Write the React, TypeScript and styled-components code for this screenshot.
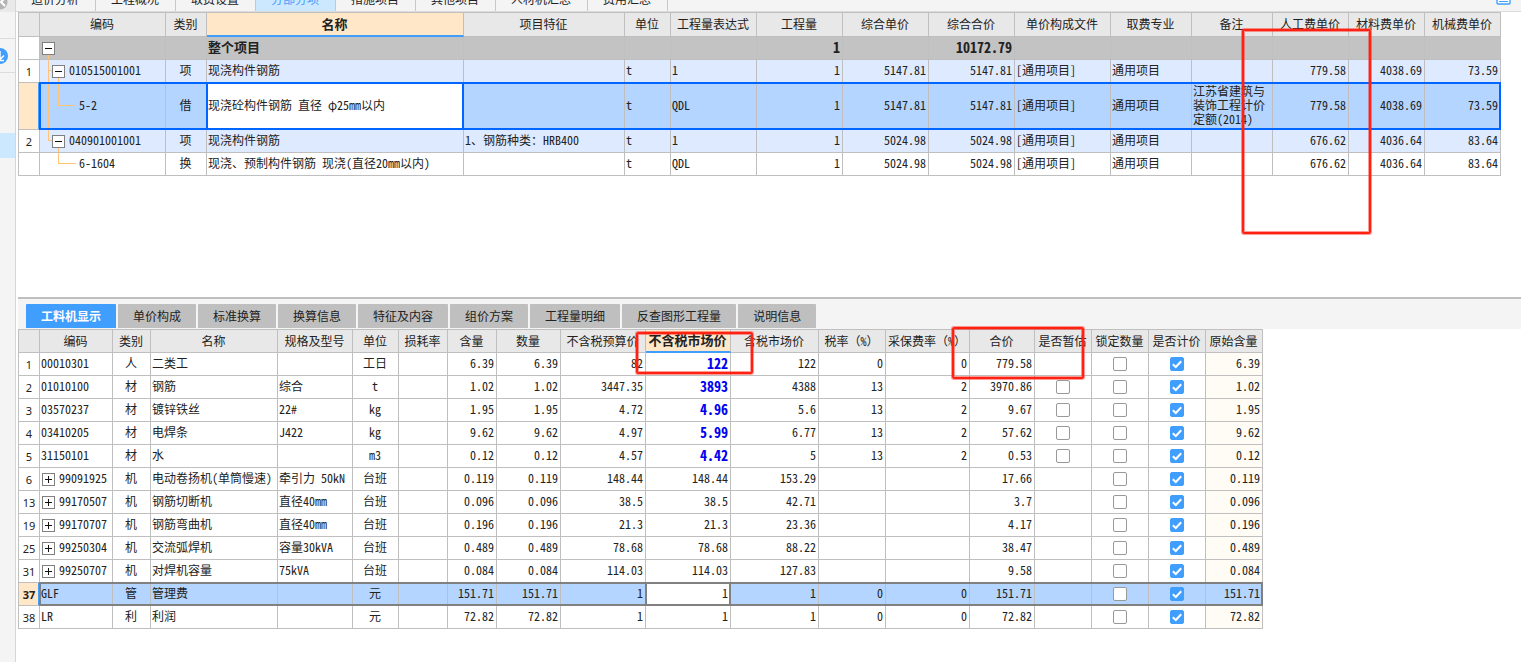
import React from "react";
import styled, { createGlobalStyle, css } from "styled-components";

const GRID_FONT = `"Noto Sans Mono CJK SC", "Noto Sans CJK SC", sans-serif`;
const UI_FONT = `"Noto Sans CJK SC", sans-serif`;

const color = {
  line: "#bfbfbf",
  chrome: "#f4f4f4",
  header: "#e8e8e8",
  accent: "#409eff",
  focus: "#0066ff",
  tint: "#ffe7c8",
  selected: "#b3d5ff",
  item: "#deeaff",
  total: "#c3c3c3",
  mark: "#ff2212",
  tree: "#ffc477",
};

const GlobalStyle = createGlobalStyle`
  *, *::before, *::after { box-sizing: border-box; }
  body { margin: 0; background: #fff; color: #222; font-family: ${UI_FONT}; font-size: 12px; }
  button { font: inherit; color: inherit; }
`;

const Page = styled.div`
  display: flex;
  min-height: 100vh;
  overflow: hidden;
`;

const Sidebar = styled.aside`
  flex: 0 0 16px;
  display: flex;
  flex-direction: column;
  overflow: hidden;
  background: ${color.chrome};
  border-right: 1px solid #d6d6d6;
`;

const SideItem = styled.button<{ $height: number; $shade?: string; $line?: boolean }>`
  display: flex;
  align-items: center;
  flex: none;
  height: ${(p) => p.$height}px;
  overflow: hidden;
  padding: 0;
  border: 0;
  border-bottom: ${(p) => (p.$line ? "1px solid #dcdcdc" : "0")};
  background: ${(p) => p.$shade ?? "transparent"};

  svg {
    flex: none;
    margin-left: -8px;
  }
`;

const SideGap = styled.div`
  flex: 0 0 60px;
`;

const Main = styled.main`
  flex: 1;
  min-width: 0;
  display: flex;
  flex-direction: column;
`;

const PageTabs = styled.nav`
  display: flex;
  align-items: flex-end;
  height: 12px;
  overflow: hidden;
  background: ${color.chrome};
  border-bottom: 1px solid #dcdcdc;
`;

const PageTab = styled.button<{ $active?: boolean }>`
  flex: none;
  height: 24px;
  padding: 0 16px 0 15px;
  border: 0;
  border-right: 1px solid #c8c8c8;
  line-height: 24px;
  background: ${(p) => (p.$active ? "#cce8ff" : "transparent")};
  color: ${(p) => (p.$active ? "#4a9dff" : "#222")};
`;

const PanelButton = styled.button`
  display: flex;
  margin-left: auto;
  padding: 0 10px 6px 0;
  border: 0;
  background: none;
`;

const UpperPane = styled.section`
  position: relative;
  flex: 0 0 285px;
  padding-left: 2px;
`;

const LowerPane = styled.section`
  position: relative;
  flex: 1;
  padding-left: 2px;
`;

const DetailTabs = styled.nav`
  display: flex;
  align-items: flex-end;
  gap: 2px;
  height: 32px;
  padding: 0 8px 1px;
  background: ${color.chrome};
  border-top: 2px solid ${color.line};
`;

const DetailTab = styled.button<{ $active?: boolean }>`
  height: 24px;
  padding: 0 15px;
  border: 0;
  border-radius: 1px 1px 0 0;
  line-height: 24px;
  background: ${(p) => (p.$active ? color.accent : color.line)};
  color: ${(p) => (p.$active ? "#fff" : "#222")};
  font-weight: ${(p) => (p.$active ? 700 : 400)};
`;

const Grid = styled.table<{ $width: number }>`
  width: ${(p) => p.$width}px;
  table-layout: fixed;
  border-collapse: separate;
  border-spacing: 0;
  border-top: 1px solid ${color.line};
  border-left: 1px solid ${color.line};
  font-family: ${GRID_FONT};
  font-size: 12px;
  line-height: 14px;
`;

const HeadCell = styled.th<{ $height: number; $current?: boolean }>`
  height: ${(p) => p.$height}px;
  padding: 0 1px 1px 0;
  border-right: 1px solid ${color.line};
  border-bottom: 1px solid ${color.line};
  background: ${color.header};
  font-weight: 400;
  white-space: nowrap;
  overflow: hidden;
  ${(p) =>
    p.$current &&
    css`
      background: ${color.tint};
      border-bottom: 2px solid ${color.accent};
      font-size: 13px;
      font-weight: 700;
    `}
`;

type Align = "left" | "center" | "right";

const Cell = styled.td<{ $align?: Align; $wrap?: boolean; $edited?: boolean; $shade?: string; $flush?: boolean }>`
  padding: 0 2px ${(p) => (p.$flush ? 0 : 2)}px 1px;
  border-right: 1px solid ${color.line};
  border-bottom: 1px solid ${color.line};
  text-align: ${(p) => p.$align ?? "left"};
  white-space: ${(p) => (p.$wrap ? "normal" : "nowrap")};
  background: ${(p) => p.$shade ?? "transparent"};
  ${(p) =>
    p.$edited &&
    css`
      color: #0000f0;
      font-size: 14px;
      font-weight: 700;
    `}
`;

const NumberCell = styled.th<{ $current?: boolean }>`
  padding: 1px 0 0;
  border-right: 1px solid ${(p) => (p.$current ? color.accent : color.line)};
  border-bottom: 1px solid ${color.line};
  background: ${(p) => (p.$current ? color.tint : "#fff")};
  box-shadow: ${(p) => (p.$current ? `inset -1px 0 ${color.accent}` : "none")};
  font-family: "Noto Sans", sans-serif;
  font-size: 11px;
  font-weight: ${(p) => (p.$current ? 700 : 400)};
`;

const Row = styled.tr<{ $height: number; $tone?: string; $outline?: string }>`
  height: ${(p) => p.$height}px;
  background: ${(p) => p.$tone ?? "#fff"};
  ${(p) =>
    p.$tone === color.total &&
    css`
      ${Cell} {
        font-size: 13px;
        font-weight: 700;
      }
      ${Cell}[data-numeric="true"] {
        font-size: 14px;
      }
    `}
  ${(p) =>
    p.$outline &&
    css`
      ${Cell} {
        position: relative;
      }
      ${Cell}::after {
        content: "";
        position: absolute;
        inset: -1px;
        border: solid ${p.$outline};
        border-width: 2px 0;
        pointer-events: none;
      }
      ${Cell}:nth-child(2)::after {
        border-left-width: 2px;
      }
      ${Cell}:last-child::after {
        border-right-width: 2px;
      }
      ${Cell}[data-active="true"] {
        background: #fff;
        z-index: 1;
      }
      ${Cell}[data-active="true"]::after {
        border-width: 2px;
      }
    `}
`;

const TreeBox = styled.div<{ $height: number }>`
  display: flex;
  align-items: center;
  height: ${(p) => p.$height}px;
  padding-left: 1px;
`;

const TreeText = styled.span`
  padding-bottom: 2px;
`;

const Guide = styled.span<{ $kind: "through" | "tee" | "end" | "leaf" | "none" }>`
  position: relative;
  flex: none;
  align-self: stretch;
  width: ${(p) => (p.$kind === "leaf" ? 24 : 10)}px;
  margin-right: ${(p) => (p.$kind === "leaf" ? 3 : 0)}px;

  &::before {
    content: "";
    display: ${(p) => (p.$kind === "none" ? "none" : "block")};
    position: absolute;
    left: 6px;
    top: 0;
    bottom: ${(p) => (p.$kind === "end" || p.$kind === "leaf" ? "50%" : "0")};
    border-left: 1px solid ${color.tree};
  }
  &::after {
    content: "";
    display: ${(p) => (p.$kind === "through" || p.$kind === "none" ? "none" : "block")};
    position: absolute;
    left: 6px;
    right: 0;
    top: calc(50% - 1px);
    border-top: 1px solid ${color.tree};
  }
`;

const ToggleSlot = styled.span<{ $open?: boolean }>`
  position: relative;
  flex: none;
  display: flex;
  align-items: center;
  align-self: stretch;
  margin-right: 4px;

  &::after {
    content: "";
    display: ${(p) => (p.$open ? "block" : "none")};
    position: absolute;
    left: 6px;
    top: calc(50% + 7px);
    bottom: 0;
    border-left: 1px solid ${color.tree};
  }
`;

const ToggleButton = styled.button`
  display: flex;
  padding: 0;
  border: 0;
  background: #fff;
`;

function Toggle({ open }: { open?: boolean }) {
  return (
    <ToggleSlot $open={open}>
      <ToggleButton type="button" aria-label={open ? "折叠" : "展开"}>
        <svg width="13" height="13" viewBox="0 0 13 13" shapeRendering="crispEdges">
          <rect x="0.5" y="0.5" width="12" height="12" fill="#fff" stroke="#808080" />
          <path d={open ? "M3 6.5H10" : "M3 6.5H10M6.5 3V10"} stroke="#111" fill="none" />
        </svg>
      </ToggleButton>
    </ToggleSlot>
  );
}

const TickSlot = styled.span`
  position: relative;
  display: block;
  width: 14px;
  height: 14px;
  margin: 0 auto;

  svg {
    position: absolute;
    inset: 0;
    pointer-events: none;
  }
`;

const TickInput = styled.input`
  appearance: none;
  display: block;
  width: 14px;
  height: 14px;
  margin: 0;
  border: 1px solid #999;
  border-radius: 2px;
  background: #fff;

  &:checked {
    border-color: ${color.accent};
    background: ${color.accent};
  }
  & + svg {
    display: none;
  }
  &:checked + svg {
    display: block;
  }
`;

function Tick({ label, on }: { label: string; on?: boolean }) {
  return (
    <TickSlot>
      <TickInput type="checkbox" aria-label={label} defaultChecked={on} />
      <svg width="14" height="14" viewBox="0 0 14 14">
        <path d="M2.8 7.2L5.8 10L11.2 4.2" fill="none" stroke="#fff" strokeWidth="2" />
      </svg>
    </TickSlot>
  );
}

/* Red review marks laid over the tables. */
const Mark = styled.div<{ $x: number; $y: number; $w: number; $h: number }>`
  position: absolute;
  z-index: 2;
  left: ${(p) => p.$x}px;
  top: ${(p) => p.$y}px;
  width: ${(p) => p.$w}px;
  height: ${(p) => p.$h}px;
  border: 2px solid ${color.mark};
  border-radius: 2px;
  box-shadow: 0 0 0 1px rgba(255, 34, 18, 0.45), inset 0 0 0 1px rgba(255, 34, 18, 0.45);
  pointer-events: none;
`;

const pageTabs = ["造价分析", "工程概况", "取费设置", "分部分项", "措施项目", "其他项目", "人材机汇总", "费用汇总"];
const detailTabs = ["工料机显示", "单价构成", "标准换算", "换算信息", "特征及内容", "组价方案", "工程量明细", "反查图形工程量", "说明信息"];

interface Column {
  title: string;
  width: number;
  align?: Align;
  current?: boolean;
}

const itemColumns: Column[] = [
  { title: "编码", width: 126 },
  { title: "类别", width: 41, align: "center" },
  { title: "名称", width: 257, current: true },
  { title: "项目特征", width: 161 },
  { title: "单位", width: 46 },
  { title: "工程量表达式", width: 86 },
  { title: "工程量", width: 86, align: "right" },
  { title: "综合单价", width: 86, align: "right" },
  { title: "综合合价", width: 86, align: "right" },
  { title: "单价构成文件", width: 96 },
  { title: "取费专业", width: 81 },
  { title: "备注", width: 81 },
  { title: "人工费单价", width: 76, align: "right" },
  { title: "材料费单价", width: 76, align: "right" },
  { title: "机械费单价", width: 76, align: "right" },
];

interface Item {
  no: string;
  kind: "total" | "item" | "quota";
  last?: boolean;
  selected?: boolean;
  cells: string[];
}

const items: Item[] = [
  { no: "", kind: "total", cells: ["", "", "整个项目", "", "", "", "1", "", "10172.79", "", "", "", "", "", ""] },
  { no: "1", kind: "item", cells: ["010515001001", "项", "现浇构件钢筋", "", "t", "1", "1", "5147.81", "5147.81", "[通用项目]", "通用项目", "", "779.58", "4038.69", "73.59"] },
  { no: "", kind: "quota", selected: true, cells: ["5-2", "借", "现浇砼构件钢筋 直径 φ25mm以内", "", "t", "QDL", "1", "5147.81", "5147.81", "[通用项目]", "通用项目", "江苏省建筑与装饰工程计价定额(2014)", "779.58", "4038.69", "73.59"] },
  { no: "2", kind: "item", last: true, cells: ["040901001001", "项", "现浇构件钢筋", "1、钢筋种类：HRB400", "t", "1", "1", "5024.98", "5024.98", "[通用项目]", "通用项目", "", "676.62", "4036.64", "83.64"] },
  { no: "", kind: "quota", last: true, cells: ["6-1604", "换", "现浇、预制构件钢筋 现浇(直径20mm以内)", "", "t", "QDL", "1", "5024.98", "5024.98", "[通用项目]", "通用项目", "", "676.62", "4036.64", "83.64"] },
];

const partColumns: Column[] = [
  { title: "编码", width: 73 },
  { title: "类别", width: 38, align: "center" },
  { title: "名称", width: 127 },
  { title: "规格及型号", width: 75 },
  { title: "单位", width: 46, align: "center" },
  { title: "损耗率", width: 49, align: "right" },
  { title: "含量", width: 49, align: "right" },
  { title: "数量", width: 64, align: "right" },
  { title: "不含税预算价", width: 85, align: "right" },
  { title: "不含税市场价", width: 85, align: "right", current: true },
  { title: "含税市场价", width: 88, align: "right" },
  { title: "税率（%）", width: 67, align: "right" },
  { title: "采保费率（%）", width: 84, align: "right" },
  { title: "合价", width: 65, align: "right" },
];

const flagColumns: Column[] = [
  { title: "是否暂估", width: 57 },
  { title: "锁定数量", width: 57 },
  { title: "是否计价", width: 57 },
  { title: "原始含量", width: 57 },
];

interface Part {
  no: string;
  group?: boolean;
  edited?: boolean;
  estimate?: boolean;
  selected?: boolean;
  cells: string[];
}

const parts: Part[] = [
  { no: "1", edited: true, cells: ["00010301", "人", "二类工", "", "工日", "", "6.39", "6.39", "82", "122", "122", "0", "0", "779.58"] },
  { no: "2", edited: true, estimate: true, cells: ["01010100", "材", "钢筋", "综合", "t", "", "1.02", "1.02", "3447.35", "3893", "4388", "13", "2", "3970.86"] },
  { no: "3", edited: true, estimate: true, cells: ["03570237", "材", "镀锌铁丝", "22#", "kg", "", "1.95", "1.95", "4.72", "4.96", "5.6", "13", "2", "9.67"] },
  { no: "4", edited: true, estimate: true, cells: ["03410205", "材", "电焊条", "J422", "kg", "", "9.62", "9.62", "4.97", "5.99", "6.77", "13", "2", "57.62"] },
  { no: "5", edited: true, estimate: true, cells: ["31150101", "材", "水", "", "m3", "", "0.12", "0.12", "4.57", "4.42", "5", "13", "2", "0.53"] },
  { no: "6", group: true, cells: ["99091925", "机", "电动卷扬机(单筒慢速)", "牵引力 50kN", "台班", "", "0.119", "0.119", "148.44", "148.44", "153.29", "", "", "17.66"] },
  { no: "13", group: true, cells: ["99170507", "机", "钢筋切断机", "直径40mm", "台班", "", "0.096", "0.096", "38.5", "38.5", "42.71", "", "", "3.7"] },
  { no: "19", group: true, cells: ["99170707", "机", "钢筋弯曲机", "直径40mm", "台班", "", "0.196", "0.196", "21.3", "21.3", "23.36", "", "", "4.17"] },
  { no: "25", group: true, cells: ["99250304", "机", "交流弧焊机", "容量30kVA", "台班", "", "0.489", "0.489", "78.68", "78.68", "88.22", "", "", "38.47"] },
  { no: "31", group: true, cells: ["99250707", "机", "对焊机容量", "75kVA", "台班", "", "0.084", "0.084", "114.03", "114.03", "127.83", "", "", "9.58"] },
  { no: "37", selected: true, cells: ["GLF", "管", "管理费", "", "元", "", "151.71", "151.71", "1", "1", "1", "0", "0", "151.71"] },
  { no: "38", cells: ["LR", "利", "利润", "", "元", "", "72.82", "72.82", "1", "1", "1", "0", "0", "72.82"] },
];

const NUMBER_WIDTH = 21;

const tableWidth = (columns: Column[]) =>
  columns.reduce((sum, c) => sum + c.width, NUMBER_WIDTH + 1);

function GridHead({ columns, height }: { columns: Column[]; height: number }) {
  return (
    <>
      <colgroup>
        <col width={NUMBER_WIDTH} />
        {columns.map((c) => (
          <col key={c.title} width={c.width} />
        ))}
      </colgroup>
      <thead>
        <tr>
          <HeadCell $height={height} />
          {columns.map((c) => (
            <HeadCell key={c.title} scope="col" $height={height} $current={c.current}>
              {c.title}
            </HeadCell>
          ))}
        </tr>
      </thead>
    </>
  );
}

function ItemCode({ item, height }: { item: Item; height: number }) {
  return (
    <TreeBox $height={height - 1}>
      {item.kind === "item" && <Guide $kind={item.last ? "end" : "tee"} />}
      {item.kind === "quota" && (
        <>
          <Guide $kind={item.last ? "none" : "through"} />
          <Guide $kind="leaf" />
        </>
      )}
      {item.kind !== "quota" && <Toggle open />}
      <TreeText>{item.cells[0]}</TreeText>
    </TreeBox>
  );
}

function ItemTable() {
  const tones = { total: color.total, item: color.item, quota: "#fff" };
  return (
    <Grid $width={tableWidth(itemColumns)}>
      <GridHead columns={itemColumns} height={24} />
      <tbody>
        {items.map((item, r) => {
          const height = item.selected ? 47 : 23;
          return (
            <Row
              key={r}
              $height={height}
              $tone={item.selected ? color.selected : tones[item.kind]}
              $outline={item.selected ? color.focus : undefined}
            >
              <NumberCell scope="row" $current={item.selected}>
                {item.no}
              </NumberCell>
              {itemColumns.map((c, i) => (
                <Cell
                  key={c.title}
                  $align={c.align}
                  $wrap={c.title === "备注"}
                  $flush={i === 0}
                  data-numeric={c.align === "right"}
                  data-active={item.selected && c.current}
                >
                  {i === 0 ? <ItemCode item={item} height={height} /> : item.cells[i]}
                </Cell>
              ))}
            </Row>
          );
        })}
      </tbody>
    </Grid>
  );
}

function PartTable() {
  const columns = [...partColumns, ...flagColumns];
  return (
    <Grid $width={tableWidth(columns)}>
      <GridHead columns={columns} height={23} />
      <tbody>
        {parts.map((part) => (
          <Row
            key={part.no}
            $height={23}
            $tone={part.selected ? color.selected : undefined}
            $outline={part.selected ? "#808080" : undefined}
          >
            <NumberCell scope="row" $current={part.selected}>
              {part.no}
            </NumberCell>
            {partColumns.map((c, i) => (
              <Cell
                key={c.title}
                $align={c.align}
                $flush={i === 0 && part.group}
                $edited={part.edited && c.current}
                data-active={part.selected && c.current}
              >
                {i === 0 && part.group ? (
                  <TreeBox $height={22}>
                    <Toggle />
                    <TreeText>{part.cells[0]}</TreeText>
                  </TreeBox>
                ) : (
                  part.cells[i]
                )}
              </Cell>
            ))}
            <Cell $flush>{part.estimate && <Tick label={`${part.cells[2]} 是否暂估`} />}</Cell>
            <Cell $flush>
              <Tick label={`${part.cells[2]} 锁定数量`} />
            </Cell>
            <Cell $flush>
              <Tick label={`${part.cells[2]} 是否计价`} on />
            </Cell>
            <Cell $align="right" $shade={part.selected ? undefined : "#fffbf5"}>
              {part.cells[6]}
            </Cell>
          </Row>
        ))}
      </tbody>
    </Grid>
  );
}

export default function App() {
  return (
    <>
      <GlobalStyle />
      <Page>
        <Sidebar>
          <SideItem type="button" aria-label="收起" $height={12} $shade="#e9e9e9">
            <svg width="16" height="16" viewBox="0 0 16 16">
              <circle cx="8" cy="4" r="7.5" fill="#b4b4b4" />
              <path d="M13 0L9 4L13 8" fill="none" stroke="#fff" strokeWidth="2" />
            </svg>
          </SideItem>
          <SideItem as="div" $height={27} $line />
          <SideItem type="button" aria-label="下载" $height={34} $line>
            <svg width="16" height="16" viewBox="0 0 16 16">
              <circle cx="8" cy="8" r="8" fill="#409eff" />
              <path d="M8 3V11M4 7.5L8 11.5L12 7.5M4 12.5H12" fill="none" stroke="#fff" strokeWidth="1.4" />
            </svg>
          </SideItem>
          <SideGap />
          <SideItem type="button" aria-label="当前工程" $height={25} $shade="#cce8ff" />
        </Sidebar>
        <Main>
          <PageTabs>
            {pageTabs.map((t) => (
              <PageTab key={t} type="button" $active={t === "分部分项"}>
                {t}
              </PageTab>
            ))}
            <PanelButton type="button" aria-label="窗口">
              <svg width="15" height="12" viewBox="0 0 15 12">
                <rect x="1" y="1" width="13" height="10" rx="1" fill="#fff" stroke="#409eff" strokeWidth="1.4" />
                <path d="M3 8.5H12" stroke="#409eff" />
              </svg>
            </PanelButton>
          </PageTabs>
          <UpperPane>
            <ItemTable />
            <Mark $x={1226} $y={17} $w={129} $h={205} />
          </UpperPane>
          <LowerPane>
            <DetailTabs>
              {detailTabs.map((t, i) => (
                <DetailTab key={t} type="button" $active={i === 0}>
                  {t}
                </DetailTab>
              ))}
            </DetailTabs>
            <PartTable />
            <Mark $x={620} $y={35} $w={117} $h={42} />
            <Mark $x={936} $y={30} $w={132} $h={52} />
          </LowerPane>
        </Main>
      </Page>
    </>
  );
}
